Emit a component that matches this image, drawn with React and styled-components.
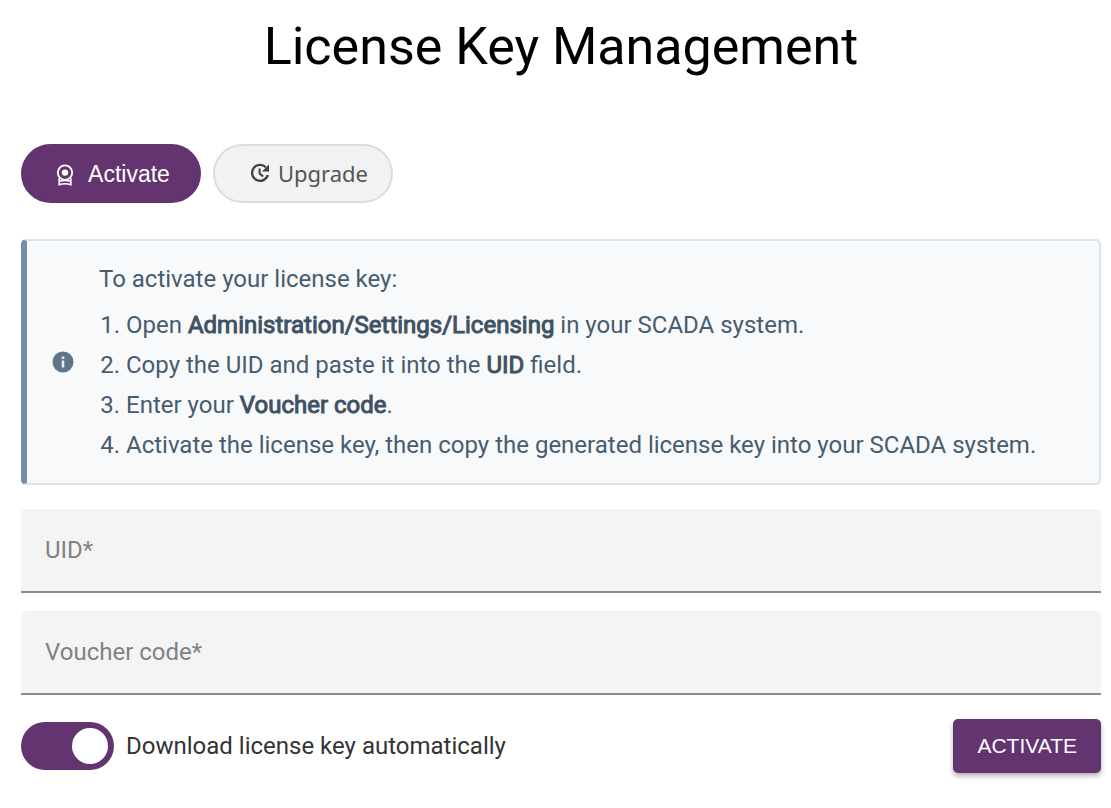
import React, { useState } from "react";
import styled, { createGlobalStyle, css } from "styled-components";

const GlobalStyle = createGlobalStyle`
  * {
    box-sizing: border-box;
  }
  body {
    margin: 0;
    background: #ffffff;
    font-family: Roboto, "Liberation Sans", sans-serif;
  }
`;

const Page = styled.main`
  padding: 17px 10px 35px 21px;
`;
const Title = styled.h1`
  margin: 0 0 67px;
  font-size: 52px;
  line-height: 60px;
  font-weight: 400;
  color: #000000;
  text-align: center;
`;
const Modes = styled.div`
  display: flex;
  gap: 12px;
  margin-bottom: 36px;
`;
const ModeButton = styled.button`
  display: flex;
  align-items: center;
  justify-content: center;
  gap: ${(props) => (props.$active ? "14px" : "8px")};
  width: 180px;
  height: 59px;
  padding: ${(props) => (props.$active ? "2px 0 0 4px" : "0 0 2px 12px")};
  border: 2px solid #dcdcdc;
  border-radius: 30px;
  background: #f2f2f2;
  color: #555555;
  font-family: "Noto Sans", sans-serif;
  font-size: 22px;
  cursor: pointer;
  ${(props) =>
    props.$active &&
    css`
      border-color: #63346f;
      background: #63346f;
      color: #ffffff;
      font-family: "Liberation Sans", sans-serif;
      font-size: 23px;
    `}
`;
const Notice = styled.section`
  display: flex;
  align-items: center;
  gap: 25px;
  margin-bottom: 24px;
  padding: 18px 24px 18px 25px;
  border: 2px solid #dbe3eb;
  border-left: 6px solid #778fa6;
  border-radius: 5px;
  background: #f8f9fb;
  color: #475c6f;
  font-size: 24px;
  line-height: 40px;
`;
const NoticeIcon = styled.svg`
  flex: none;
  width: 22px;
  height: 22px;
`;
const NoticeIntro = styled.p`
  margin: 0 0 6px;
`;
const Steps = styled.ol`
  margin: 0;
  padding: 0 0 0 27px;
`;
const Strong = styled.strong`
  font-weight: 400;
  color: #3f5263;
  -webkit-text-stroke: 1px #3f5263;
`;
const Field = styled.input`
  display: block;
  width: 100%;
  height: 84px;
  margin-bottom: 18px;
  padding: 0 24px;
  border: 0;
  border-bottom: 2px solid #8b8b8b;
  border-radius: 5px 5px 0 0;
  background: #f4f4f4;
  color: #333333;
  font-family: inherit;
  font-size: 24px;
  outline: none;
  &::placeholder {
    color: #828282;
    opacity: 1;
  }
`;
const Actions = styled.div`
  display: flex;
  align-items: center;
  justify-content: space-between;
  padding-top: 6px;
`;
const ToggleLabel = styled.label`
  display: flex;
  align-items: center;
  gap: 12px;
  color: #333333;
  font-size: 24px;
  line-height: 40px;
  cursor: pointer;
`;
const Toggle = styled.input`
  appearance: none;
  display: flex;
  align-items: center;
  width: 93px;
  height: 48px;
  margin: 0;
  padding: 0 6px;
  border-radius: 24px;
  background: #b5b5b5;
  cursor: pointer;
  &::before {
    content: "";
    width: 36px;
    height: 36px;
    border-radius: 50%;
    background: #ffffff;
  }
  &:checked {
    justify-content: flex-end;
    background: #63346f;
  }
`;
const SubmitButton = styled.button`
  height: 54px;
  padding: 0 24px;
  border: 0;
  border-radius: 5px;
  background: #63346f;
  box-shadow: 0 3px 5px rgba(0, 0, 0, 0.3);
  color: #ffffff;
  font-family: "Liberation Sans", sans-serif;
  font-size: 21px;
  cursor: pointer;
`;

const AwardIcon = () => (
  <svg width="18" height="22" viewBox="0 0 18 22" fill="none" stroke="currentColor" aria-hidden="true">
    <circle cx="9" cy="8.6" r="7.2" strokeWidth="1.8" />
    <circle cx="9" cy="8.6" r="3.2" fill="currentColor" stroke="none" />
    <path d="M3.2 14v6.7c3.4-1.1 8.2-1.1 11.6 0V14M3.2 17.2c3.4-1 8.2-1 11.6 0" strokeWidth="1.7" />
  </svg>
);

const UpdateIcon = () => (
  <svg width="20" height="20" viewBox="0 0 20 20" fill="none" stroke="#3f3f3f" aria-hidden="true">
    <path d="M15.8 4.2A8 8 0 1 0 17.8 12" strokeWidth="2.3" />
    <path d="M19 1.5v7h-7z" fill="#3f3f3f" stroke="none" />
    <path d="M9.6 5.5v5l3.6 3" strokeWidth="2" />
  </svg>
);

export default function App() {
  const [mode, setMode] = useState("activate");
  const [autoDownload, setAutoDownload] = useState(true);

  return (
    <>
      <GlobalStyle />
      <Page>
        <Title>License Key Management</Title>
        <Modes>
          <ModeButton
            type="button"
            $active={mode === "activate"}
            onClick={() => setMode("activate")}
          >
            <AwardIcon />
            Activate
          </ModeButton>
          <ModeButton
            type="button"
            $active={mode === "upgrade"}
            onClick={() => setMode("upgrade")}
          >
            <UpdateIcon />
            Upgrade
          </ModeButton>
        </Modes>
        <Notice>
          <NoticeIcon viewBox="0 0 22 22" aria-hidden="true">
            <circle cx="11" cy="11" r="10.5" fill="#5f758a" />
            <path d="M9.7 5.5h2.6v2.6H9.7zM9.7 9.5h2.6v7H9.7z" fill="#e9eef3" />
          </NoticeIcon>
          <div>
            <NoticeIntro>To activate your license key:</NoticeIntro>
            <Steps>
              <li>
                Open <Strong>Administration/Settings/Licensing</Strong> in your
                SCADA system.
              </li>
              <li>
                Copy the UID and paste it into the <Strong>UID</Strong> field.
              </li>
              <li>
                Enter your <Strong>Voucher code</Strong>.
              </li>
              <li>
                Activate the license key, then copy the generated license key
                into your SCADA system.
              </li>
            </Steps>
          </div>
        </Notice>
        <Field type="text" placeholder="UID*" aria-label="UID" required />
        <Field
          type="text"
          placeholder="Voucher code*"
          aria-label="Voucher code"
          required
        />
        <Actions>
          <ToggleLabel>
            <Toggle
              type="checkbox"
              checked={autoDownload}
              onChange={(e) => setAutoDownload(e.target.checked)}
            />
            Download license key automatically
          </ToggleLabel>
          <SubmitButton type="submit">ACTIVATE</SubmitButton>
        </Actions>
      </Page>
    </>
  );
}
